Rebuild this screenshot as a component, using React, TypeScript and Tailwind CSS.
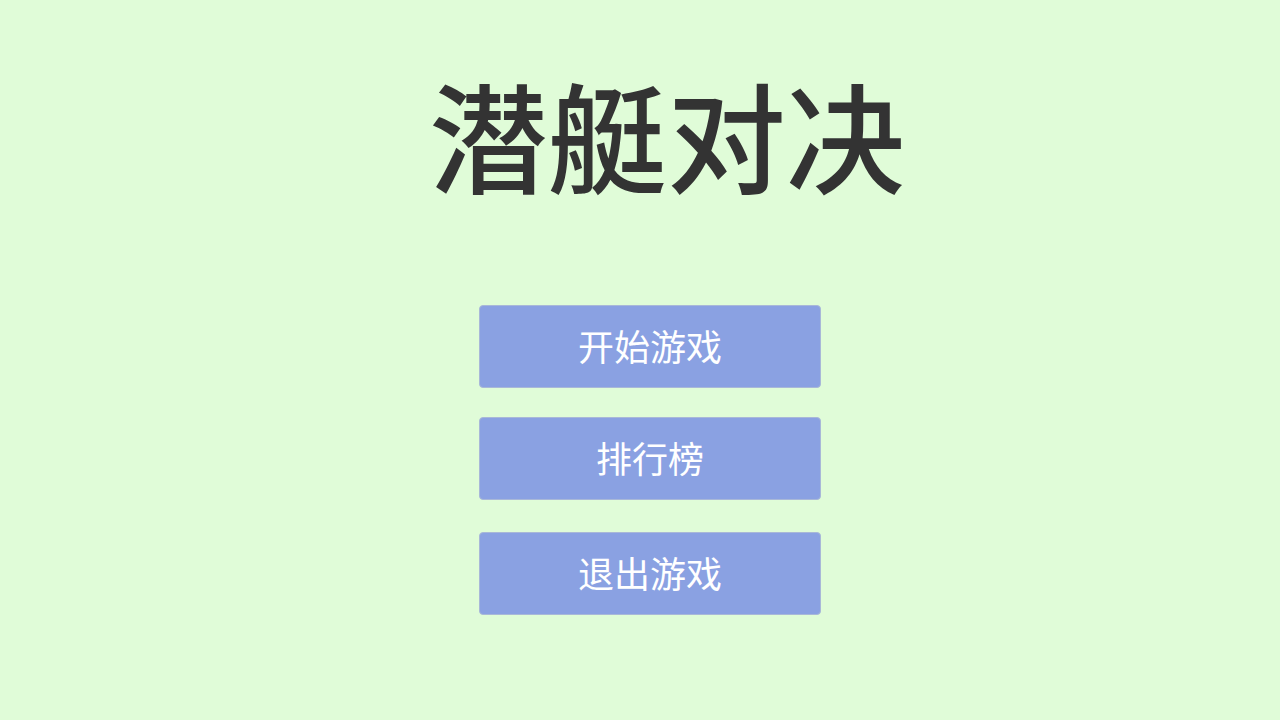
import React from "react";

const cjk = { fontFamily: '"Noto Sans CJK SC", "Noto Sans", sans-serif' };

const items = [
  { label: "开始游戏", mt: "mt-0" },
  { label: "排行榜", mt: "mt-[29px]" },
  { label: "退出游戏", mt: "mt-[32px]" },
];

export default function App() {
  return (
    <div
      className="w-[1280px] h-[720px] bg-[#e0fcd8] flex flex-col items-center pl-[20px] overflow-hidden"
      style={cjk}
    >
      <h1 className="mt-[74px] pl-[34px] text-[119px] leading-none font-medium text-[#333333]">
        潜艇对决
      </h1>
      <div className="mt-[112px] flex flex-col items-center">
        {items.map((it) => (
          <button
            key={it.label}
            className={`${it.mt} w-[342px] h-[83px] rounded-[4px] bg-[#8aa1e2] border border-[#a9b8d8] text-white text-[36px] leading-none flex items-center justify-center pb-[4px]`}
          >
            {it.label}
          </button>
        ))}
      </div>
    </div>
  );
}
